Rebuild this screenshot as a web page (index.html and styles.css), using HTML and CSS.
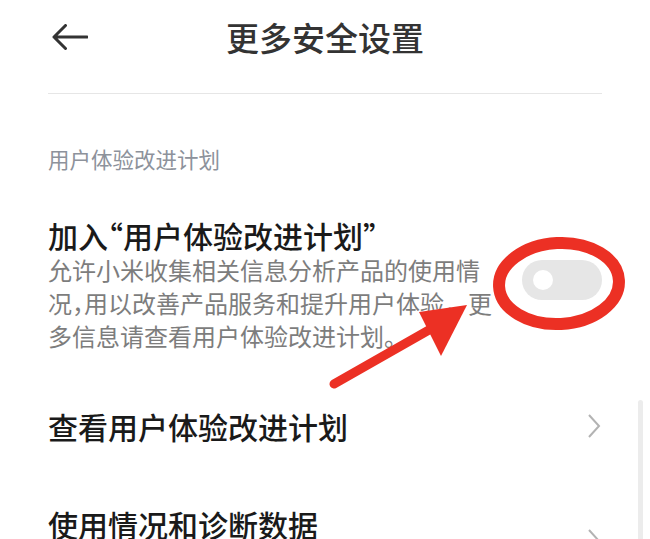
FILE: index.html
```html
<!DOCTYPE html>
<html lang="zh-CN">
<head>
<meta charset="utf-8">
<title>更多安全设置</title>
<link rel="stylesheet" href="styles.css">
</head>
<body>
<div class="page">
  <header class="topbar">
    <div class="back">
      <svg width="36" height="26" viewBox="0 0 36 26"><path d="M2 13 H35 M13.5 1.5 L2 13 L13.5 24.5" fill="none" stroke="#333" stroke-width="3" stroke-linecap="round" stroke-linejoin="round"/></svg>
    </div>
    <h1 class="title">更多安全设置</h1>
    <div></div>
  </header>
  <div class="divider"></div>

  <main class="content">
    <div class="section-title">用户体验改进计划</div>

    <div class="switch-item">
      <div class="text">
        <div class="item-title">加入<span class="half">“</span>用户体验改进计划<span class="half">”</span></div>
        <div class="item-summary">允许小米收集相关信息分析产品的使用情<br>况<span class="half">，</span>用以改善产品服务和提升用户体验，更<br>多信息请查看用户体验改进计划。</div>
      </div>
      <div class="toggle"><span class="knob"></span></div>
    </div>

    <div class="row">
      <div class="item-title">查看用户体验改进计划</div>
      <svg class="chev" width="14" height="26" viewBox="0 0 14 26"><path d="M2 2 L12 13 L2 24" fill="none" stroke="#b3b3b3" stroke-width="2"/></svg>
    </div>
    <div class="row row-tall">
      <div class="item-title">使用情况和诊断数据</div>
      <svg class="chev" width="14" height="26" viewBox="0 0 14 26"><path d="M2 2 L12 13 L2 24" fill="none" stroke="#b3b3b3" stroke-width="2"/></svg>
    </div>
  </main>

  <div class="scrollbar"></div>

  <svg class="annotation" width="650" height="539" viewBox="0 0 650 539">
    <ellipse cx="559" cy="283.5" rx="60" ry="40.5" fill="none" stroke="#ec3024" stroke-width="12" transform="rotate(-3 559 283.5)"/>
    <line x1="334" y1="384" x2="443" y2="322" stroke="#ec3024" stroke-width="9" stroke-linecap="round"/>
    <polygon points="467,305 419,312 441,356" fill="#ec3024"/>
  </svg>
</div>
</body>
</html>
```

FILE: styles.css
```css
html, body {
  margin: 0;
  padding: 0;
  background: #ffffff;
}

.page {
  position: relative;
  width: 650px;
  height: 539px;
  overflow: hidden;
  font-family: "Noto Sans CJK SC", "Noto Sans", sans-serif;
  background: #ffffff;
}

.topbar {
  display: grid;
  grid-template-columns: 1fr auto 1fr;
  align-items: center;
  height: 74px;
}

.back {
  padding-left: 52px;
  display: flex;
  align-items: center;
}

.title {
  margin: 0;
  font-size: 33px;
  line-height: 40px;
  font-weight: 500;
  color: #333333;
}

.divider {
  margin: 19px 48px 0;
  height: 1px;
  background: #e6e6e6;
}

.content {
  padding: 0 48px;
}

.section-title {
  margin-top: 50px;
  font-size: 21.5px;
  line-height: 30px;
  color: #8d929b;
}

.switch-item {
  display: flex;
  align-items: center;
  justify-content: space-between;
  margin-top: 43px;
}

.item-title {
  font-size: 30px;
  line-height: 36px;
  font-weight: 500;
  color: #1a1a1a;
}

.item-summary {
  font-size: 24px;
  line-height: 33px;
  color: #7d7d7d;
}

.half {
  font-feature-settings: "halt";
}

.toggle {
  position: relative;
  flex: none;
  width: 80px;
  height: 40px;
  border-radius: 20px;
  background: #e6e6e6;
  margin-bottom: 9px;
  display: flex;
  align-items: center;
  padding-left: 11px;
  box-sizing: border-box;
}

.knob {
  width: 20px;
  height: 20px;
  border-radius: 50%;
  background: #ffffff;
}

.row {
  display: flex;
  align-items: center;
  justify-content: space-between;
  padding: 31px 0;
}

.switch-item + .row {
  margin-top: 25px;
}

.chev {
  margin-right: 1px;
}

.row-tall {
  align-items: flex-start;
}

.row-tall .chev {
  margin-top: 22px;
}

.scrollbar {
  position: absolute;
  right: 7px;
  top: 400px;
  bottom: 0;
  width: 5px;
  border-radius: 3px 3px 0 0;
  background: #ececec;
}

.annotation {
  position: absolute;
  left: 0;
  top: 0;
  pointer-events: none;
}
```
